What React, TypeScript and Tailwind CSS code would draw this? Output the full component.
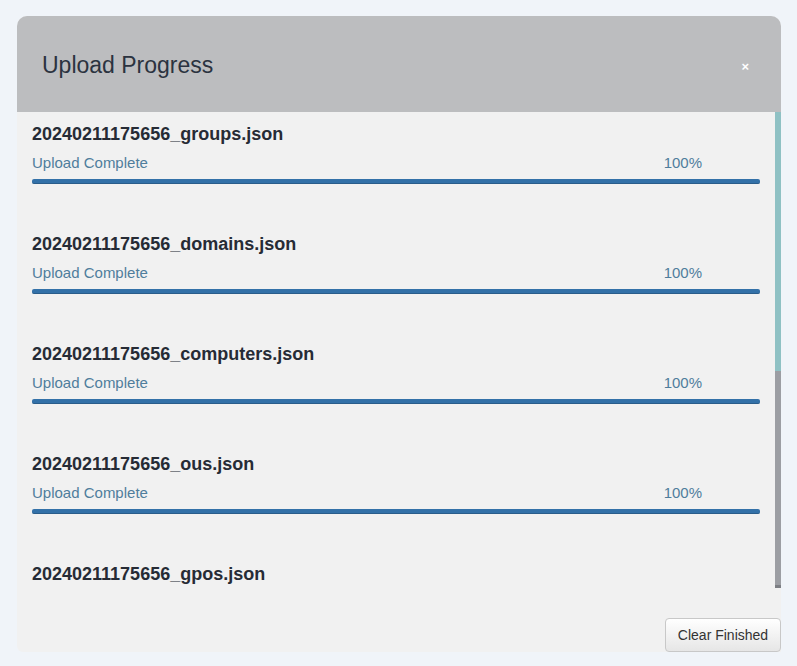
const files = [
  { name: "20240211175656_groups.json", done: true },
  { name: "20240211175656_domains.json", done: true },
  { name: "20240211175656_computers.json", done: true },
  { name: "20240211175656_ous.json", done: true },
  { name: "20240211175656_gpos.json", done: false },
];

const UploadItem = ({ name, done }: { name: string; done: boolean }) => (
  <div className="h-[110px] pt-3 shrink-0">
    <div className="text-[18px] leading-[20px] font-bold text-[#262b35]">{name}</div>
    {done && (
      <>
        <div className="mt-[9px] flex justify-between pr-[58px] text-[15px] leading-[20px] text-[#4f7d9c]">
          <span>Upload Complete</span>
          <span>100%</span>
        </div>
        <div className="mt-[6px] h-[5px] rounded-[2px] bg-[#3371a8] border-b border-[#2a5d8a]" />
      </>
    )}
  </div>
);

export default function App() {
  return (
    <div
      className="min-h-[666px] w-full bg-[#f0f4f9] pt-4 pl-[17px]"
      style={{ fontFamily: '"Liberation Sans", Arial, sans-serif' }}
    >
      <div className="w-[764px] h-[636px] flex flex-col rounded-t-[10px] rounded-bl-[6px] overflow-hidden bg-[#f1f1f1]">
        <div className="h-[96px] shrink-0 bg-[#bcbdbf] flex items-center justify-between pl-[25px] pr-[32px]">
          <h1 className="text-[23px] leading-none text-[#2b3340] pt-[2px]">Upload Progress</h1>
          <span className="text-white text-[13px] font-bold leading-none pt-[5px]">×</span>
        </div>
        <div className="h-[476px] flex shrink-0">
          <div className="flex-1 overflow-hidden pl-[15px] pr-[15px] flex flex-col">
            {files.map((f) => (
              <UploadItem key={f.name} name={f.name} done={f.done} />
            ))}
          </div>
          <div className="w-[6px] flex flex-col">
            <div className="h-[259px] bg-[#8fc1c4]" />
            <div className="flex-1 bg-[#9c9ea3] border-b-[3px] border-[#7d7f84]" />
          </div>
        </div>
        <div className="flex-1 flex items-end justify-end">
          <button className="h-[34px] w-[116px] rounded-[4px] border border-[#c8c8c8] bg-gradient-to-b from-[#ffffff] to-[#e6e6e6] text-[14px] text-[#333] font-[inherit]">
            Clear Finished
          </button>
        </div>
      </div>
    </div>
  );
}
